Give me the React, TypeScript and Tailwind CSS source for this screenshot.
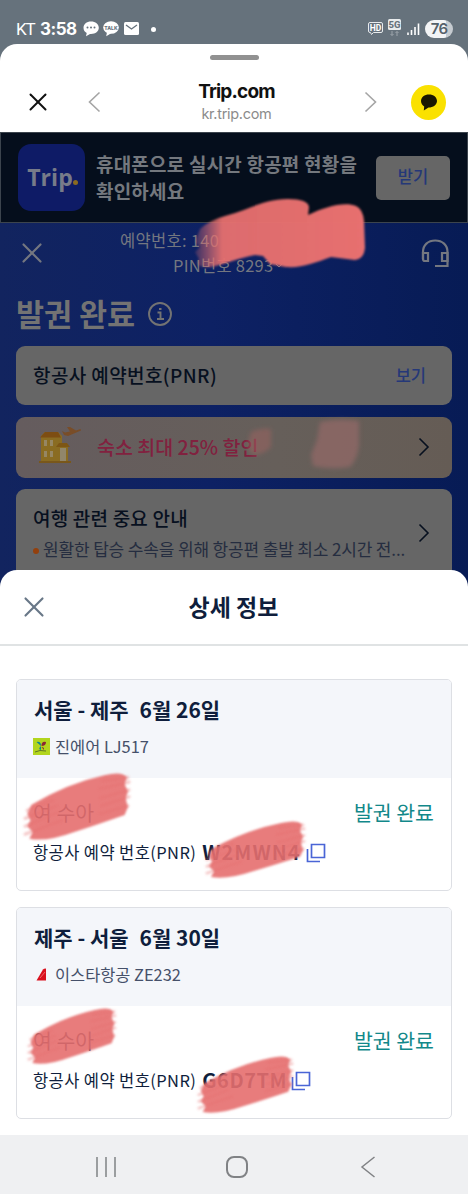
import React from 'react';
import { X } from 'lucide-react';

type Flight = {
    route: string;
    date: string;
    airline: string;
    logo: 'jin' | 'eastar';
    passenger: string;
    pnr: string;
};

const flights: Flight[] = [
    { route: '서울 - 제주', date: '6월 26일', airline: '진에어 LJ517', logo: 'jin', passenger: '여 수아', pnr: 'W2MWN4' },
    { route: '제주 - 서울', date: '6월 30일', airline: '이스타항공 ZE232', logo: 'eastar', passenger: '여 수아', pnr: 'G6D7TM' },
];

const StatusBar: React.FC = () => (
    <div className="flex h-11 items-start bg-[#66727c] pl-4 pr-[15px] pt-[18px] text-white">
        <div className="flex h-[22px] items-center leading-none">
            <span className="w-[19px] font-['Roboto'] text-[17px] tracking-[-1.2px]">KT</span>
            <span className="ml-[5px] w-[36px] font-['Inter'] text-[17px] font-bold tracking-[-0.5px]">3:58</span>
            <svg className="ml-[7px]" width="58" height="18" viewBox="0 0 58 18">
                <path d="M8 1.5C3.600 1.500.500 4 .500 7.800c0 2.400 1.300 4.200 3.200 5.200L3 16.200l4-2.200h1c4.500 0 7.800-2.500 7.800-6.200S12.500 1.500 8 1.500Z" fill="#fff" />
                <circle cx="4.5" cy="7.5" r="1" fill="#66727c" />
                <circle cx="8" cy="7.5" r="1" fill="#66727c" />
                <circle cx="11.5" cy="7.5" r="1" fill="#66727c" />
                <ellipse cx="28" cy="7.500" rx="7.800" ry="6.300" fill="#fff" />
                <path d="m24 12-.8 4.200 5-3Z" fill="#fff" />
                <text x="28" y="9.500" textAnchor="middle" fontSize="5" fontFamily="Inter" fontWeight="800" fill="#66727c">TALK</text>
                <rect x="41" y="2" width="15" height="13" rx="1.500" fill="#fff" />
                <path d="m43 5 5.500 4L54 5" fill="none" stroke="#66727c" strokeWidth="1.300" />
            </svg>
            <span className="ml-[10px] size-[5px] rounded-full bg-white" />
        </div>
        <div className="ml-auto flex h-[22px] items-center">
            <svg width="54" height="20" viewBox="0 0 54 20" fill="none">
                <path d="M3 3.500h11q1.500 0 1.500 1.500v7q0 1.500-1.500 1.500H6.500l-2 2-1-2H3Q1.500 13.500 1.500 12V5Q1.500 3.500 3 3.500Z" stroke="#e8ebed" />
                <text x="8.500" y="11.700" textAnchor="middle" fontSize="8.500" fontFamily="Roboto" fontWeight="700" fill="#fff">HD</text>
                <rect x="21" y="0" width="13" height="11" rx="1.500" fill="#e8ebed" />
                <text x="27.500" y="9" textAnchor="middle" fontSize="9.500" fontFamily="Roboto" fontWeight="800" fill="#66727c">5G</text>
                <path d="M25 12v4.500m-1.500-1.500 1.500 1.500 1.500-1.500M30 17v-4.500m-1.500 1.500 1.500-1.500 1.500 1.500" stroke="#9ca4ab" />
                <path d="M41 13.500v2.500M44.500 11v5M48 8v8M51.500 4.500v11.500" stroke="#fff" strokeWidth="1.600" />
            </svg>
            <div className="ml-[4px] flex h-[18px] w-[28px] items-center justify-center rounded-full bg-[linear-gradient(90deg,#f3f4f6_74%,#c6cbd0_74%)] font-['Inter'] text-[15px] font-semibold tracking-[-0.8px] text-[#55616b]">
                76
            </div>
        </div>
    </div>
);

const BrowserHeader: React.FC = () => (
    <div className="bg-[#66727c]">
        <div className="h-[88px] rounded-t-[17px] bg-white pt-[11px]">
            <div className="mx-auto h-[5px] w-[49px] rounded-full bg-[#919191]" />
            <div className="mt-[19px] flex h-[46px] items-center pl-[23px] pr-[22px]">
                <X size={30} strokeWidth={1.6} className="text-[#111]" />
                <svg className="ml-[35px]" width="13" height="22" viewBox="0 0 13 22" fill="none" stroke="#a5a5a5" strokeWidth="1.600"><path d="M11.500 1.500 1.500 11l10 9.500" /></svg>
                <div className="flex flex-1 flex-col items-center pl-[8px] pt-[2px] font-['Inter'] leading-none">
                    <span className="h-[25px] text-[19px] font-bold tracking-[-0.8px] text-[#111]">Trip.com</span>
                    <span className="h-[18px] text-[14.5px] tracking-[-0.3px] text-[#8b8b8b]">kr.trip.com</span>
                </div>
                <svg className="mr-[34px]" width="13" height="22" viewBox="0 0 13 22" fill="none" stroke="#a5a5a5" strokeWidth="1.600"><path d="m1.500 1.500 10 9.500-10 9.500" /></svg>
                <div className="flex size-[35px] items-center justify-center rounded-full bg-[#fae100]">
                    <svg width="18" height="17" viewBox="0 0 18 17" fill="#191600"><path d="M9 .5C4.500.5 1 3.200 1 7c0 2.600 1.500 4.500 3.200 5.500L3.800 16.500l4.700-3c4.700 0 8.500-2.700 8.500-6.500S13.500.5 9 .5Z" /></svg>
                </div>
            </div>
        </div>
    </div>
);

const AppBanner: React.FC = () => (
    <div className="flex h-[91px] items-center border border-[#3c444d] bg-[#050e1c] px-[17px]">
        <div className="flex size-[67px] items-center justify-center rounded-[13px] bg-[#0e1b66] text-[#777b89]">
            <span className="ml-[2px] font-['Open_Sans'] text-[23px] font-bold tracking-[0.1px]">Trip</span>
            <span className="mt-[10px] size-[5px] rounded-full bg-[#8a6a21]" />
        </div>
        <div className="ml-[11px] flex flex-col whitespace-nowrap pb-[2px] text-[19px] font-bold leading-[27px] tracking-[0.2px] text-[#74787e]">
            <span>휴대폰으로 실시간 항공편 현황을</span>
            <span>확인하세요</span>
        </div>
        <div className="ml-auto flex h-[44px] w-[74px] items-center justify-center rounded-[5px] bg-[#666] pb-[3px] text-[16.5px] font-medium text-[#253878]">
            받기
        </div>
    </div>
);

const HotelIcon: React.FC = () => (
    <svg width="44" height="40" viewBox="0 0 44 40">
        <path d="M4 9 8 5h13l4 4v27H4Z" fill="#8a6c22" />
        <path d="M3 10.500 8 5h13l3 5.500Z" fill="#7d4d12" />
        <path d="M21 19h10v17H21Z" fill="#8a6c22" />
        <path d="m19 20 3-4h8l3 4Z" fill="#7d5615" />
        <path d="M23 21h6v13h-6Z" fill="#91866a" />
        <path d="M7 13h3v6H7Zm6 0h3v6h-3ZM7 24h3v6H7Zm6 0h3v6h-3Z" fill="#968763" />
        <path d="M2 34h32v2H2Z" fill="#79571b" />
        <path d="m27 8-2-4 3 1.500 5-1L30 0h3l6 3.500 4.500-1.500.5 1.500L31 9Z" fill="#794d28" />
    </svg>
);

const Arrow: React.FC = () => (
    <svg className="shrink-0" width="12" height="20" viewBox="0 0 12 20" fill="none" stroke="#07101f" strokeWidth="1.600"><path d="m1.500 1.500 8.500 8.500-8.500 8.500" /></svg>
);

const BookingPage: React.FC = () => (
    <div className="h-[364px] overflow-hidden whitespace-nowrap bg-[linear-gradient(90deg,#12245f_0%,#0d2164_45%,#071b55_100%)] px-4">
        <div className="flex h-[64px] items-start text-[#747780]">
            <X size={34} strokeWidth={1.5} className="-ml-[1px] mt-[13px]" />
            <div className="ml-[71px] flex w-[210px] flex-col pt-[5px] text-[16.5px] leading-[25px]">
                <span className="tracking-[0.3px]">예약번호: 140</span>
                <div className="ml-[53px] flex items-center">
                    <span className="tracking-[0.25px]">PIN번호 8293</span>
                    <svg className="ml-[2px]" width="8" height="6" viewBox="0 0 8 6" fill="none" stroke="currentColor"><path d="m1 1 3 3 3-3" /></svg>
                </div>
            </div>
            <svg className="ml-auto mr-[2px] mt-[15px]" width="29" height="32" viewBox="0 0 29 32" fill="none" stroke="currentColor" strokeWidth="2.200">
                <path d="M2 21v-7C2 7 7 2.500 14.200 2.500S26.500 7 26.500 14v14H14" />
                <path d="M2 15h5v8H4q-2 0-2-2ZM21 15h5.500v8H21Z" />
            </svg>
        </div>
        <div className="flex h-[59px] items-center pb-[7px] text-[#737373]">
            <span className="text-[30.5px] font-bold leading-none">발권 완료</span>
            <svg className="ml-[12px] mt-[2px]" width="26" height="26" viewBox="0 0 26 26" fill="none" stroke="currentColor" strokeWidth="1.900">
                <circle cx="13" cy="13" r="11" />
                <path d="M10.500 11.500h3v6.500m-3.500 0h7M12 8h2.500" />
            </svg>
        </div>
        <div className="flex flex-col">
            <div className="flex h-[59px] items-center justify-between rounded-[9px] bg-[#666] pb-px pl-[17px] pr-[26px]">
                <span className="text-[19px] font-medium tracking-[0.4px] text-[#07101f]">항공사 예약번호(PNR)</span>
                <span className="text-[16.5px] font-medium text-[#253878]">보기</span>
            </div>
            <div className="mt-[12px] flex h-[61px] items-center rounded-[9px] bg-[linear-gradient(90deg,#655c5e,#665f5a_60%,#655c55)] pb-px pl-[21px] pr-[22px]">
                <HotelIcon />
                <span className="ml-[16px] text-[19.5px] font-medium text-[#81213f]">숙소 최대 25% 할인</span>
                <div className="ml-auto"><Arrow /></div>
            </div>
            <div className="mt-[11px] flex h-[110px] items-start rounded-[9px] bg-[#666] pl-[17px] pr-[22px] pt-[14px]">
                <div className="flex flex-col">
                    <span className="text-[19px] font-medium leading-[30px] tracking-[0.2px] text-[#07101f]">여행 관련 중요 안내</span>
                    <div className="flex items-center text-[17px] leading-[32px] tracking-[-0.15px] text-[#252d40]">
                        <span className="mr-[4px] mt-[3px] size-[6px] rounded-full bg-[#93400d]" />
                        원활한 탑승 수속을 위해 항공편 출발 최소 2시간 전...
                    </div>
                </div>
                <div className="ml-auto mt-[20px]"><Arrow /></div>
            </div>
        </div>
    </div>
);

const AirlineLogo: React.FC<{ logo: Flight['logo'] }> = ({ logo }) => (
    <svg width="17" height="17" viewBox="0 0 17 17">
        {logo === 'jin' ? (
            <>
                <rect width="17" height="17" fill="#b2d51d" />
                <path d="M8 8 3.500 4q4-1 4.500 3Zm0 0v4Q4.500 11 8 8Z" fill="#0b8692" />
                <path d="M8.500 8q0-5 4.500-4 0 4-4.500 4Zm0 1q3 0 2.500 3Z" fill="#8b2634" />
                <path d="m2 14 5-1.500 6 .5" fill="none" stroke="#617526" />
            </>
        ) : (
            <>
                <path d="M3.500 14.500 10 3.500q.6-1 3-1v12Z" fill="#d9101d" />
                <path d="m7 12 5-6" stroke="#f28a88" strokeWidth=".7" />
            </>
        )}
    </svg>
);

const FlightCard: React.FC<{ flight: Flight }> = ({ flight }) => (
    <div className="h-[212px] overflow-hidden whitespace-nowrap rounded-[5px] border border-[#dddfe4] bg-white text-[#0f1e3c]">
        <div className="h-[98px] bg-[#f4f6fa] pl-[17px] pt-[13px]">
            <div className="flex gap-[11px] text-[21px] font-bold leading-[32px]">
                <span>{flight.route}</span>
                <span>{flight.date}</span>
            </div>
            <div className="-ml-px mt-[9px] flex items-center gap-[5px] text-[16.4px] leading-[24px] text-[#455069]">
                <AirlineLogo logo={flight.logo} />
                <span>{flight.airline}</span>
            </div>
        </div>
        <div className="pl-[16px] pr-[17px] pt-[19px]">
            <div className="flex justify-between text-[20.5px] leading-[30px]">
                <span>{flight.passenger}</span>
                <span className="text-[#12888a]">발권 완료</span>
            </div>
            <div className="mt-[9px] flex items-center leading-[32px]">
                <span className="text-[16.5px] tracking-[0.4px]">항공사 예약 번호(PNR)</span>
                <span className={`ml-[6px] text-[20px] font-bold ${flight.logo === 'jin' ? 'w-[98px] tracking-[1px]' : 'w-[83px] tracking-[0.5px]'}`}>{flight.pnr}</span>
                <svg className="ml-[6px] mt-px" width="20" height="20" viewBox="0 0 20 20" fill="none" stroke="#4a65d6" strokeWidth="1.700">
                    <path d="M5.500 1.500h13v13h-13Z" />
                    <path d="M1.500 6v12.500H14" />
                </svg>
            </div>
        </div>
    </div>
);

const DetailSheet: React.FC = () => (
    <div className="relative -mt-[17px] h-[565px] rounded-t-[17px] bg-white">
        <div className="flex h-[76px] items-center border-b-2 border-[#e0e3e4] pl-[17px] text-[#0f1e3c]">
            <X size={34} strokeWidth={1.5} className="-mt-[1px] text-[#687787]" />
            <div className="flex flex-1 justify-center pb-[2px] pr-[52px] text-[23px] font-bold">상세 정보</div>
        </div>
        <div className="flex flex-col gap-[16px] px-4 pt-[33px]">
            {flights.map(flight => <FlightCard key={flight.pnr} flight={flight} />)}
        </div>
    </div>
);

// Marker strokes drawn on top of the page
const Strokes: React.FC<{ x: number; y: number; w: number; h: number }> = ({ x, y, w, h }) => (
    <g transform={`translate(${x} ${y}) scale(${w / 100} ${h / 60})`}>
        <path d="M8 28Q42 9 76 2q17-4 21 2l-2 6 3 6-2 7 2 7-3 7Q68 46 48 52 22 61 6 58l3-6-5-5 3-5-3-6Z" fill="#e66f6f" fillOpacity=".9" filter="url(#soft)" />
        <g stroke="#e66f6f" strokeLinecap="round" strokeOpacity=".35" strokeWidth="3" fill="none" filter="url(#soft)">
            <path d="m4 33 24-9M2 40l30-11M2 47l30-12M2 54l34-12M74 7l24-3M72 14l27-6M73 22l26-7M73 29l26-8M72 36l26-7" />
        </g>
    </g>
);

const Marker: React.FC = () => (
    <svg className="pointer-events-none absolute inset-0" width="468" height="1200" viewBox="0 0 468 1200">
        <defs>
            <filter id="soft" x="-20%" y="-20%" width="140%" height="140%"><feGaussianBlur stdDeviation="1.1" /></filter>
            <filter id="faint" x="-20%" y="-20%" width="140%" height="140%"><feGaussianBlur stdDeviation="2" /></filter>
            <linearGradient id="fade"><stop offset="0" stopColor="#e7706f" stopOpacity=".2" /><stop offset=".16" stopColor="#e7706f" stopOpacity=".95" /><stop offset="1" stopColor="#e7706f" /></linearGradient>
        </defs>
        <path d="M200 229Q210 220 225 216C248 210 264 199 288 199q20 0 21 8l-1 8c16-8 37-14 48-9q7 3 8 15l1 27q-1 11-10 12l-24-3c-17 6-28 11-45 10l-16-3-7-8-8-1c-16 3-30 9-44 12-13 1-17-3-12-8l-4-7 5-5-5-5 3-8Z" fill="url(#fade)" filter="url(#soft)" />
        <path d="M251 432q10-5 20-3v18q-6 7-18 8-6-6-5-12Z" fill="#a06360" fillOpacity=".5" filter="url(#faint)" />
        <path d="M320 422q18-4 39-1v25q-2 14-9 21-19 3-37-1l-2-11 6-15Z" fill="#8e6865" fillOpacity=".8" filter="url(#faint)" />
        <Strokes x={23} y={773} w={107} h={68} />
        <Strokes x={205} y={821} w={100} h={58} />
        <Strokes x={27} y={1008} w={89} h={57} />
        <Strokes x={197} y={1056} w={96} h={58} />
    </svg>
);

const NavigationBar: React.FC = () => (
    <div className="grid h-[59px] grid-cols-[211px_52px_205px] items-center bg-[#eff0f2] pt-[5px] text-[#808285]">
        <svg className="ml-[95px]" width="22" height="22" viewBox="0 0 22 22" stroke="currentColor" strokeWidth="1.500"><path d="M2 1v20M11 1v20M20 1v20" /></svg>
        <span className="mx-auto size-[22px] rounded-[8px] border-2 border-current" />
        <svg className="ml-[97px]" width="16" height="22" viewBox="0 0 16 22" fill="none" stroke="currentColor" strokeWidth="1.500"><path d="M14.500 1 2 11l12.500 10" /></svg>
    </div>
);

const App: React.FC = () => (
    <div className="relative h-[1200px] w-[468px] overflow-hidden bg-white font-['Noto_Sans_CJK_KR',sans-serif]">
        <StatusBar />
        <BrowserHeader />
        <AppBanner />
        <BookingPage />
        <DetailSheet />
        <NavigationBar />
        <Marker />
    </div>
);

export default App;
